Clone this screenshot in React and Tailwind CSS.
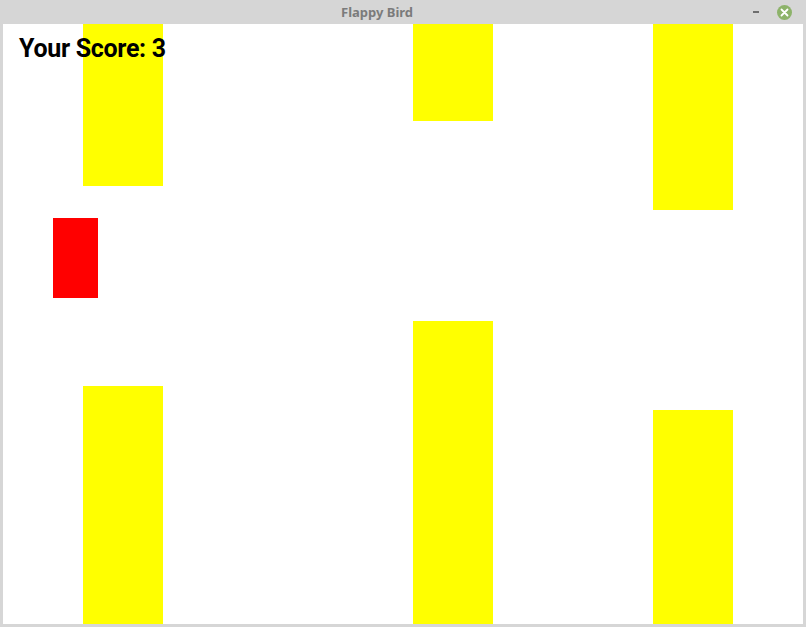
export default function App() {
  const pipes = [
    { x: 80, top: 162, bottom: 362 },
    { x: 410, top: 97, bottom: 297 },
    { x: 650, top: 186, bottom: 386 },
  ];
  return (
    <div className="w-[806px] h-[627px] bg-[#d6d6d6] flex flex-col overflow-hidden">
      <div className="h-[24px] shrink-0 flex items-center pl-[341px] pr-[14px]">
        <div
          className="text-[13px] font-bold text-[#7b7b7b] leading-[18px] -mt-[1px]"
          style={{ fontFamily: '"Noto Sans", "Open Sans", sans-serif' }}
        >
          Flappy Bird
        </div>
        <div className="ml-auto flex items-center gap-[18px]">
          <div className="w-[6px] h-[2px] bg-[#6e6e6e]" />
          <div className="w-[15px] h-[15px] rounded-full bg-[#8db36a] flex items-center justify-center">
            <svg width="9" height="9" viewBox="0 0 9 9">
              <path d="M1.5 1.5 L7.5 7.5 M7.5 1.5 L1.5 7.5" stroke="white" strokeWidth="1.8" strokeLinecap="round" />
            </svg>
          </div>
        </div>
      </div>
      <div className="ml-[3px] w-[800px] h-[600px] bg-white relative overflow-hidden shrink-0">
        {pipes.map((p, i) => (
          <div key={i}>
            <div className="absolute top-0 w-[80px] bg-[#ffff00]" style={{ left: p.x, height: p.top }} />
            <div className="absolute bottom-0 w-[80px] bg-[#ffff00]" style={{ left: p.x, top: p.bottom }} />
          </div>
        ))}
        <div className="absolute left-[50px] top-[194px] w-[45px] h-[80px] bg-[#ff0000]" />
        <div
          className="absolute left-[16px] top-[10px] text-[25px] font-bold text-black leading-[30px] tracking-[-0.3px]"
          style={{ fontFamily: 'Roboto, "Liberation Sans", sans-serif' }}
        >
          Your Score: 3
        </div>
      </div>
    </div>
  );
}
